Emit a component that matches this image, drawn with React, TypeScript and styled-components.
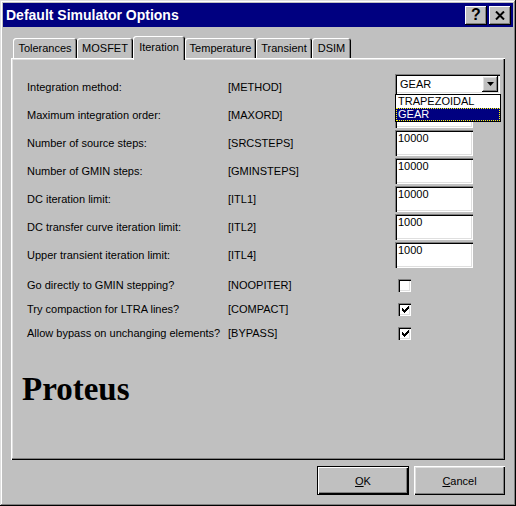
import React from 'react';
import styled, { createGlobalStyle } from 'styled-components';

const GlobalStyle = createGlobalStyle`
  html, body {
    margin: 0;
    padding: 0;
    background: #c0c0c0;
  }
`;

const Window = styled.div`
  width: 516px;
  height: 506px;
  box-sizing: border-box;
  padding: 3px;
  background: #c0c0c0;
  box-shadow: inset -1px -1px #000, inset 1px 1px #dfdfdf, inset -2px -2px #808080, inset 2px 2px #fff;
  display: flex;
  flex-direction: column;
  font-family: "Liberation Sans", Arial, sans-serif;
  font-size: 11px;
  color: #000;
`;

const TitleBar = styled.div`
  height: 24px;
  background: #000080;
  color: #fff;
  display: flex;
  align-items: center;
  padding: 0 2px 0 3px;
  gap: 2px;
`;

const Title = styled.div`
  flex: 1;
  font-size: 14px;
  font-weight: bold;
`;

const TitleButton = styled.div`
  width: 22px;
  height: 19px;
  box-sizing: border-box;
  background: #c0c0c0;
  color: #000;
  box-shadow: inset -1px -1px #000, inset 1px 1px #fff, inset -2px -2px #808080;
  display: flex;
  align-items: center;
  justify-content: center;
  font-size: 16px;
  font-weight: bold;
  line-height: 1;
`;

const Body = styled.div`
  padding: 9px 8px 0 8px;
  display: flex;
  flex-direction: column;
`;

const Tabs = styled.div`
  display: flex;
  align-items: flex-end;
  height: 22px;
  padding-left: 2px;
  position: relative;
  z-index: 1;
`;

const Tab = styled.div<{ $width: number; $active?: boolean }>`
  width: ${p => p.$width}px;
  height: ${p => (p.$active ? 24 : 20)}px;
  margin-bottom: ${p => (p.$active ? -2 : 0)}px;
  box-sizing: border-box;
  background: #c0c0c0;
  border-radius: 3px 3px 0 0;
  box-shadow: inset 1px 1px #fff, inset -1px 0 #000, inset -2px 0 #808080;
  display: flex;
  align-items: center;
  justify-content: center;
  padding-bottom: ${p => (p.$active ? 3 : 0)}px;
  font-size: 11px;
`;

const Panel = styled.div`
  height: 402px;
  box-sizing: border-box;
  padding: 15px 0 0 16px;
  box-shadow: inset 1px 1px #fff, inset -1px -1px #000, inset -2px -2px #808080, inset 2px 2px #dfdfdf;
`;

const Row = styled.div<{ $height: number; $gap?: number }>`
  display: grid;
  grid-template-columns: 201px 167px 1fr;
  align-items: center;
  height: ${p => p.$height}px;
  margin-top: ${p => p.$gap ?? 0}px;
`;

const Param = styled.span`
  white-space: nowrap;
`;

const Field = styled.div`
  width: 78px;
  height: 26px;
  box-sizing: border-box;
  background: #fff;
  padding: 2px 3px;
  line-height: 13px;
  box-shadow: inset 1px 1px #808080, inset 2px 2px #000, inset -1px -1px #fff, inset -2px -2px #dfdfdf;
`;

const ComboCell = styled.div`
  position: relative;
  align-self: start;
  margin-top: 1px;
`;

const Combo = styled.div`
  width: 105px;
  height: 20px;
  box-sizing: border-box;
  background: #fff;
  padding: 2px 2px 2px 5px;
  display: flex;
  align-items: center;
  justify-content: space-between;
  box-shadow: inset 1px 1px #808080, inset 2px 2px #000, inset -1px -1px #fff, inset -2px -2px #dfdfdf;
`;

const DropButton = styled.div`
  width: 16px;
  height: 16px;
  box-sizing: border-box;
  background: #c0c0c0;
  box-shadow: inset -1px -1px #000, inset 1px 1px #fff, inset -2px -2px #808080, inset 2px 2px #dfdfdf;
  display: flex;
  align-items: center;
  justify-content: center;
`;

const DropList = styled.div`
  position: absolute;
  top: 20px;
  left: 0;
  width: 106px;
  box-sizing: border-box;
  border: 1px solid #000;
  background: #fff;
  z-index: 2;
`;

const Option = styled.div<{ $selected?: boolean }>`
  height: 13px;
  line-height: 13px;
  padding-left: 2px;
  box-sizing: border-box;
  background: ${p => (p.$selected ? '#000080' : '#fff')};
  color: ${p => (p.$selected ? '#fff' : '#000')};
  outline: ${p => (p.$selected ? '1px dotted #ffff00' : 'none')};
  outline-offset: -1px;
`;

const Check = styled.div`
  width: 13px;
  height: 13px;
  margin-left: 3px;
  box-sizing: border-box;
  background: #fff;
  box-shadow: inset 1px 1px #808080, inset 2px 2px #000, inset -1px -1px #fff, inset -2px -2px #dfdfdf;
  display: flex;
  align-items: center;
  justify-content: center;
  padding: 1px 0 0 1px;
`;

const Brand = styled.div`
  margin-top: 28px;
  margin-left: -5px;
  font-family: "Liberation Serif", "Times New Roman", serif;
  font-weight: bold;
  font-size: 33px;
  line-height: 32px;
`;

const Buttons = styled.div`
  display: flex;
  justify-content: flex-end;
  gap: 5px;
  margin-top: 6px;
`;

const DialogButton = styled.div<{ $default?: boolean; $width: number }>`
  width: ${p => p.$width}px;
  height: 29px;
  box-sizing: border-box;
  background: #c0c0c0;
  display: flex;
  align-items: center;
  justify-content: center;
  font-size: 11px;
  box-shadow: ${p =>
    p.$default
      ? 'inset 0 0 0 1px #000, inset 2px 2px #fff, inset -2px -2px #000, inset -3px -3px #808080'
      : 'inset 1px 1px #fff, inset -1px -1px #000, inset -2px -2px #808080, inset 2px 2px #dfdfdf'};
`;

const tabs = [
  { name: 'Tolerances', width: 64 },
  { name: 'MOSFET', width: 56 },
  { name: 'Iteration', width: 52, active: true },
  { name: 'Temperature', width: 71 },
  { name: 'Transient', width: 56 },
  { name: 'DSIM', width: 39 },
];

const fields = [
  { label: 'Maximum integration order:', param: '[MAXORD]', value: '' },
  { label: 'Number of source steps:', param: '[SRCSTEPS]', value: '10000' },
  { label: 'Number of GMIN steps:', param: '[GMINSTEPS]', value: '10000' },
  { label: 'DC iteration limit:', param: '[ITL1]', value: '10000' },
  { label: 'DC transfer curve iteration limit:', param: '[ITL2]', value: '1000' },
  { label: 'Upper transient iteration limit:', param: '[ITL4]', value: '1000' },
];

const checks = [
  { label: 'Go directly to GMIN stepping?', param: '[NOOPITER]', checked: false },
  { label: 'Try compaction for LTRA lines?', param: '[COMPACT]', checked: true },
  { label: 'Allow bypass on unchanging elements?', param: '[BYPASS]', checked: true },
];

// classic 7x7 pixel tick
const CheckMark = () => (
  <svg width="7" height="7" viewBox="0 0 7 7" shapeRendering="crispEdges">
    <path
      d="M6 0h1v1h-1z M5 1h2v1h-2z M0 2h1v1h-1z M4 2h3v1h-3z M0 3h2v1h-2z M3 3h3v1h-3z M0 4h5v1h-5z M1 5h3v1h-3z M2 6h1v1h-1z"
      fill="#000"
    />
  </svg>
);

const App = () => {
  return (
    <>
      <GlobalStyle />
      <Window>
        <TitleBar>
          <Title>Default Simulator Options</Title>
          <TitleButton>?</TitleButton>
          <TitleButton>
            <svg width="10" height="9" viewBox="0 0 10 9">
              <path d="M1 0.5 L9 8.5 M9 0.5 L1 8.5" stroke="#000" strokeWidth="2" />
            </svg>
          </TitleButton>
        </TitleBar>
        <Body>
          <Tabs>
            {tabs.map(t => (
              <Tab key={t.name} $width={t.width} $active={t.active}>
                {t.name}
              </Tab>
            ))}
          </Tabs>
          <Panel>
            <Row $height={28}>
              <span>Integration method:</span>
              <Param>[METHOD]</Param>
              <ComboCell>
                <Combo>
                  <span>GEAR</span>
                  <DropButton>
                    <svg width="7" height="4" viewBox="0 0 7 4">
                      <path d="M0 0h7l-3.5 4z" fill="#000" />
                    </svg>
                  </DropButton>
                </Combo>
                <DropList>
                  <Option>TRAPEZOIDAL</Option>
                  <Option $selected>GEAR</Option>
                </DropList>
              </ComboCell>
            </Row>
            {fields.map(f => (
              <Row key={f.param} $height={28}>
                <span>{f.label}</span>
                <Param>{f.param}</Param>
                <Field>{f.value}</Field>
              </Row>
            ))}
            {checks.map((c, i) => (
              <Row key={c.param} $height={24} $gap={i === 0 ? 4 : 0}>
                <span>{c.label}</span>
                <Param>{c.param}</Param>
                <Check>{c.checked && <CheckMark />}</Check>
              </Row>
            ))}
            <Brand>Proteus</Brand>
          </Panel>
          <Buttons>
            <DialogButton $default $width={92}>
              <span><u>O</u>K</span>
            </DialogButton>
            <DialogButton $width={91}>
              <span><u>C</u>ancel</span>
            </DialogButton>
          </Buttons>
        </Body>
      </Window>
    </>
  );
};

export default App;
